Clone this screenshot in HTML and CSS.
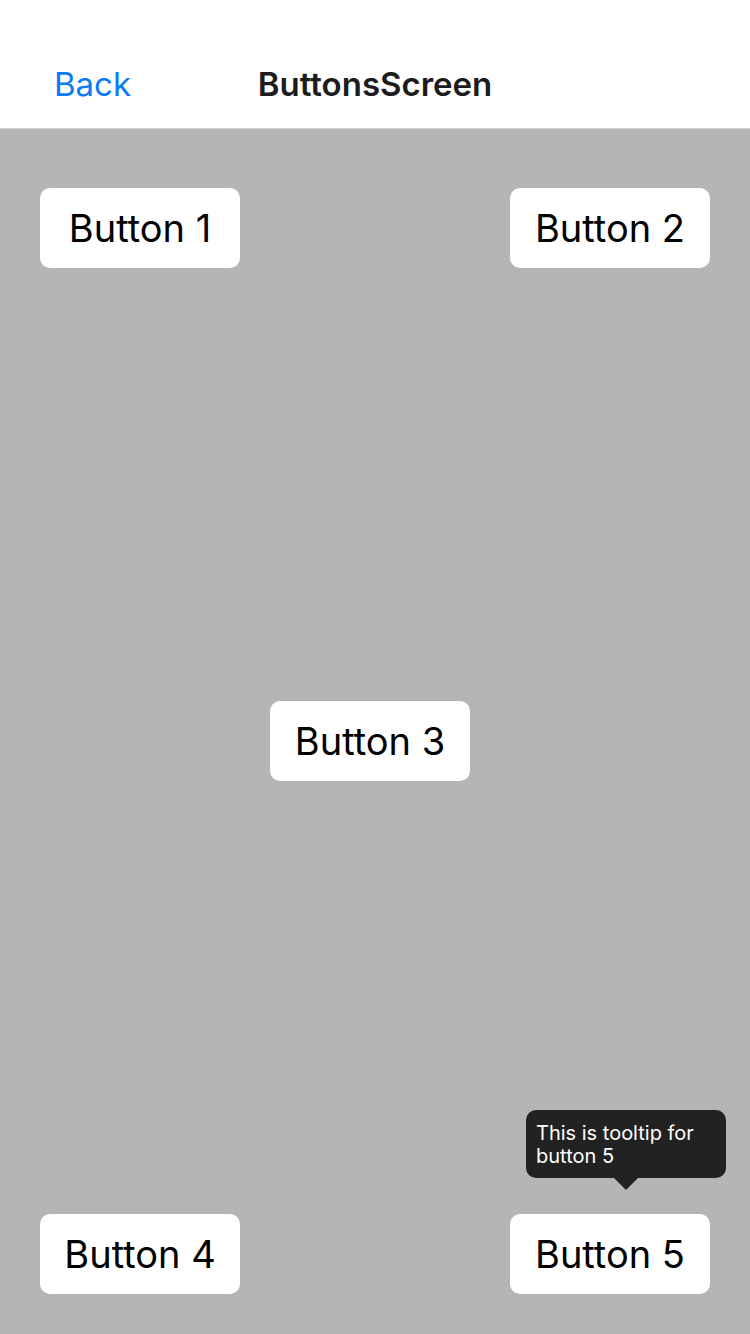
FILE: index.html
```html
<!DOCTYPE html>
<html lang="en">
<head>
<meta charset="utf-8">
<meta name="viewport" content="width=device-width, initial-scale=1">
<title>ButtonsScreen</title>
<link rel="stylesheet" href="styles.css">
</head>
<body>
<header class="navbar">
  <a class="back" href="#">Back</a>
  <h1 class="title">ButtonsScreen</h1>
</header>
<main class="screen">
  <div class="row">
    <button class="btn" type="button">Button 1</button>
    <button class="btn" type="button">Button 2</button>
  </div>
  <div class="row row-center">
    <button class="btn" type="button">Button 3</button>
  </div>
  <div class="row">
    <button class="btn" type="button">Button 4</button>
    <div class="anchor">
      <button class="btn" type="button" aria-describedby="tip5">Button 5</button>
      <div class="tooltip" id="tip5" role="tooltip">This is tooltip for button 5</div>
    </div>
  </div>
</main>
</body>
</html>
```

FILE: styles.css
```css
* {
  box-sizing: border-box;
}

body {
  margin: 0;
  min-height: 100vh;
  display: flex;
  flex-direction: column;
  font-family: Inter, "Liberation Sans", sans-serif;
  background: #b5b5b5;
}

.navbar {
  display: grid;
  grid-template-columns: 1fr auto 1fr;
  align-items: center;
  padding: 40px 54px 0;
  height: 129px;
  background: #fff;
  border-bottom: 1px solid #d0d0d0;
}

.back {
  color: #0b7bf5;
  font-size: 33px;
  text-decoration: none;
}

.title {
  margin: 0;
  color: #1c1c1e;
  font-size: 33px;
  font-weight: 600;
}

.screen {
  flex: 1;
  display: flex;
  flex-direction: column;
  justify-content: space-between;
  padding: 59px 40px 40px;
}

.row {
  display: flex;
  justify-content: space-between;
}

.row-center {
  justify-content: center;
  padding-right: 10px;
}

.btn {
  display: block;
  width: 200px;
  height: 80px;
  padding: 0;
  border: 0;
  border-radius: 10px;
  background: #fff;
  color: #000;
  font-family: inherit;
  font-size: 38px;
  white-space: nowrap;
}

.anchor {
  position: relative;
}

.tooltip {
  position: absolute;
  right: -16px;
  bottom: 116px;
  width: 200px;
  padding: 12px 10px 10px;
  border-radius: 10px;
  background: #222;
  color: #fff;
  font-size: 20px;
  line-height: 23px;
}

.tooltip::after {
  content: "";
  position: absolute;
  top: 100%;
  left: 50%;
  margin-left: -12px;
  border: 12px solid transparent;
  border-top-color: #222;
  border-bottom: 0;
}
```
